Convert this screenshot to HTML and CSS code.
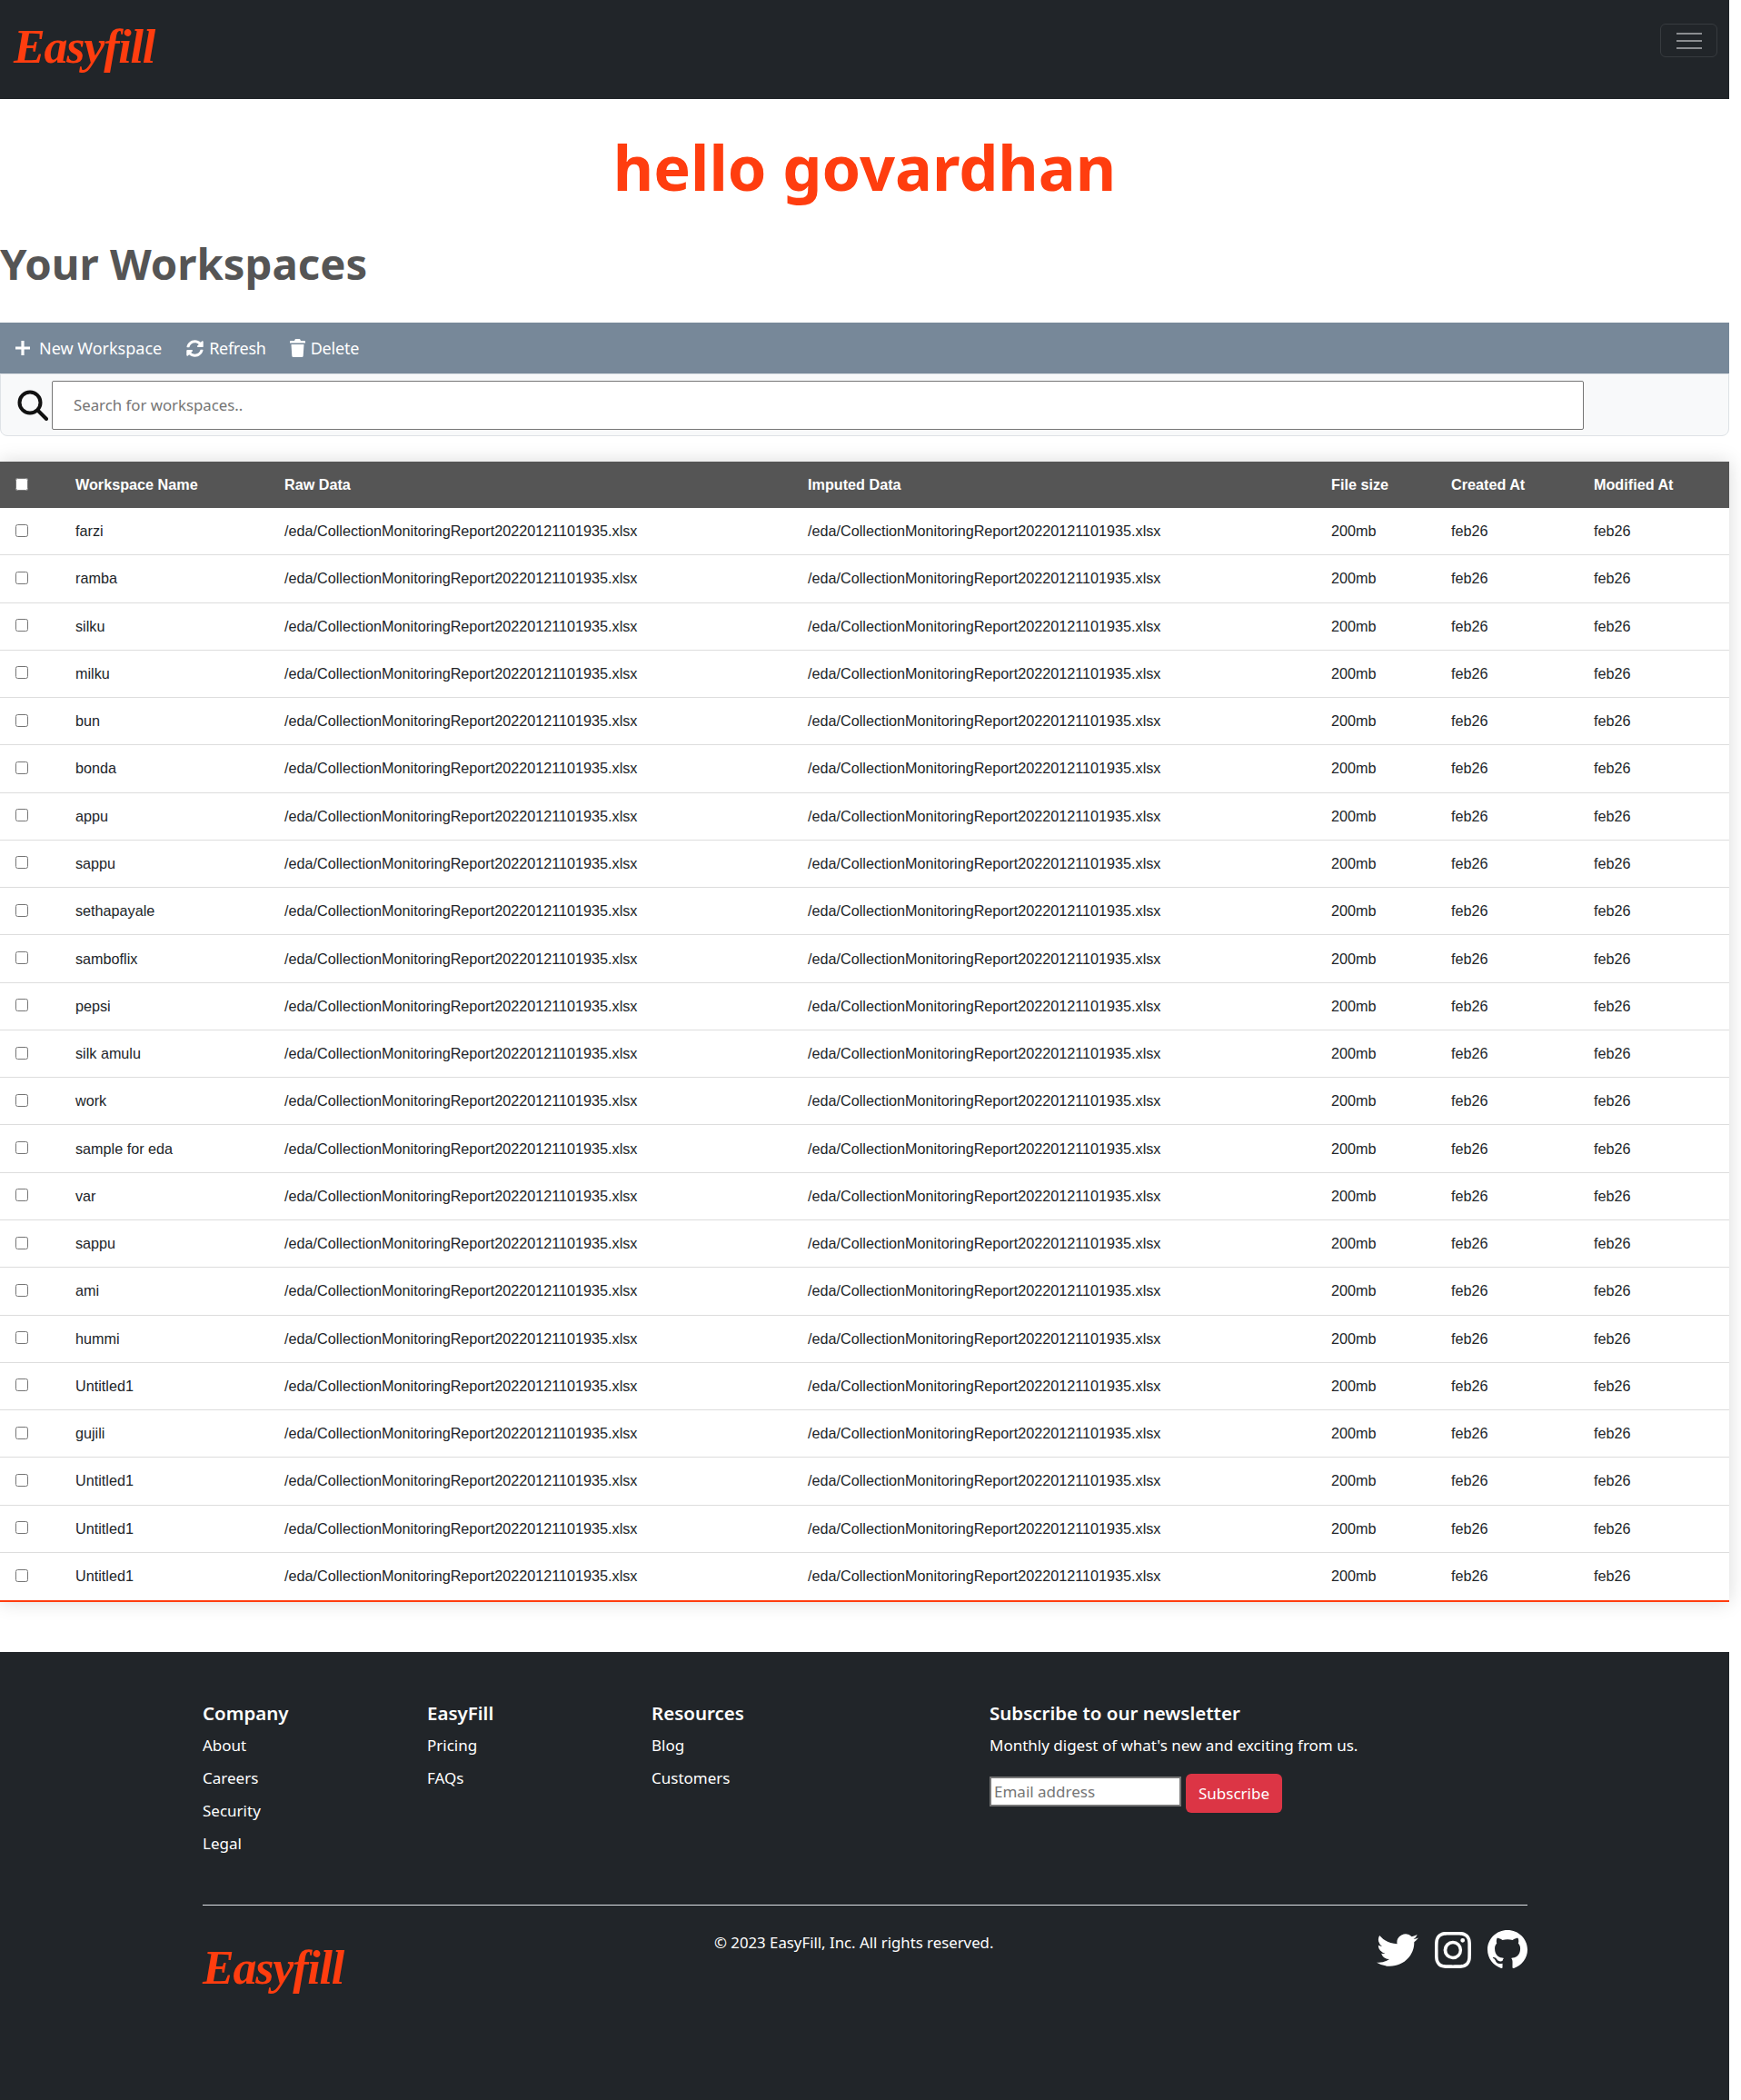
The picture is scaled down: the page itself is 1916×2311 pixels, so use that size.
FILE: index.html
```html
<!DOCTYPE html>
<html lang="en">
<head>
	<meta charset="UTF-8">
	<title>EasyFill Workspaces</title>
	<link rel="stylesheet" href="styles.css">
</head>
<body>
<div class="page">
	<nav class="navbar">
		<a class="brand" href="#">Easyfill</a>
		<button class="toggler" type="button" aria-label="Menu"><span></span><span></span><span></span></button>
	</nav>

	<h1 class="hello">hello govardhan</h1>
	<h2 class="title">Your Workspaces</h2>

	<div class="toolbar">
		<a class="tool tool-new" href="#">
			<svg width="16" height="16" viewBox="0 0 16 16"><path d="M6.400 0h3.200v6.400H16v3.200H9.600V16H6.400V9.600H0V6.400h6.400z" fill="#fff"/></svg>
			New Workspace
		</a>
		<a class="tool tool-refresh" href="#">
			<svg width="19" height="19" viewBox="0 0 512 512"><path fill="#fff" d="M370.72 133.28C339.458 104.008 298.888 87.962 255.848 88c-77.458.068-144.328 53.178-162.791 126.85-1.344 5.363-6.122 9.15-11.651 9.15H24.103c-7.498 0-13.194-6.807-11.807-14.176C33.933 94.924 134.813 8 256 8c66.448 0 126.791 26.136 171.315 68.685L463.03 40.97C478.149 25.851 504 36.559 504 57.941V192c0 13.255-10.745 24-24 24H345.941c-21.382 0-32.09-25.851-16.971-40.971l41.75-41.749zM32 296h134.059c21.382 0 32.09 25.851 16.971 40.971l-41.75 41.75c31.262 29.273 71.835 45.319 114.876 45.28 77.418-.07 144.315-53.144 162.787-126.849 1.344-5.363 6.122-9.15 11.651-9.15h57.304c7.498 0 13.194 6.807 11.807 14.176C478.067 417.076 377.187 504 256 504c-66.448 0-126.791-26.136-171.315-68.685L48.97 471.03C33.851 486.149 8 475.441 8 454.059V320c0-13.255 10.745-24 24-24z"/></svg>
			Refresh
		</a>
		<a class="tool tool-delete" href="#">
			<svg width="17" height="20" viewBox="0 0 17 20"><path fill="#fff" d="M6 0h5l1 2h4a1 1 0 0 1 1 1v1.500H0V3a1 1 0 0 1 1-1h4zM1.500 6h14l-.8 12.500A1.600 1.600 0 0 1 13.100 20H3.900a1.600 1.600 0 0 1-1.600-1.500z"/></svg>
			Delete
		</a>
	</div>

	<div class="searchbar">
		<svg class="search-icon" width="34" height="34" viewBox="0 0 34 34"><circle cx="14" cy="14" r="11.500" fill="none" stroke="#111" stroke-width="4"/><line x1="23" y1="23" x2="32" y2="32" stroke="#111" stroke-width="4" stroke-linecap="round"/></svg>
		<input class="search" type="text" placeholder="Search for workspaces..">
	</div>

	<table class="workspaces">
		<colgroup>
			<col class="c-check"><col class="c-name"><col class="c-raw"><col class="c-imputed"><col class="c-size"><col class="c-created"><col class="c-modified">
		</colgroup>
		<thead>
			<tr><th><input type="checkbox" class="check check-all"></th><th>Workspace Name</th><th>Raw Data</th><th>Imputed Data</th><th>File size</th><th>Created At</th><th>Modified At</th></tr>
		</thead>
		<tbody>
			<tr><td><input type="checkbox" class="check"></td><td>farzi</td><td>/eda/CollectionMonitoringReport20220121101935.xlsx</td><td>/eda/CollectionMonitoringReport20220121101935.xlsx</td><td>200mb</td><td>feb26</td><td>feb26</td></tr>
			<tr><td><input type="checkbox" class="check"></td><td>ramba</td><td>/eda/CollectionMonitoringReport20220121101935.xlsx</td><td>/eda/CollectionMonitoringReport20220121101935.xlsx</td><td>200mb</td><td>feb26</td><td>feb26</td></tr>
			<tr><td><input type="checkbox" class="check"></td><td>silku</td><td>/eda/CollectionMonitoringReport20220121101935.xlsx</td><td>/eda/CollectionMonitoringReport20220121101935.xlsx</td><td>200mb</td><td>feb26</td><td>feb26</td></tr>
			<tr><td><input type="checkbox" class="check"></td><td>milku</td><td>/eda/CollectionMonitoringReport20220121101935.xlsx</td><td>/eda/CollectionMonitoringReport20220121101935.xlsx</td><td>200mb</td><td>feb26</td><td>feb26</td></tr>
			<tr><td><input type="checkbox" class="check"></td><td>bun</td><td>/eda/CollectionMonitoringReport20220121101935.xlsx</td><td>/eda/CollectionMonitoringReport20220121101935.xlsx</td><td>200mb</td><td>feb26</td><td>feb26</td></tr>
			<tr><td><input type="checkbox" class="check"></td><td>bonda</td><td>/eda/CollectionMonitoringReport20220121101935.xlsx</td><td>/eda/CollectionMonitoringReport20220121101935.xlsx</td><td>200mb</td><td>feb26</td><td>feb26</td></tr>
			<tr><td><input type="checkbox" class="check"></td><td>appu</td><td>/eda/CollectionMonitoringReport20220121101935.xlsx</td><td>/eda/CollectionMonitoringReport20220121101935.xlsx</td><td>200mb</td><td>feb26</td><td>feb26</td></tr>
			<tr><td><input type="checkbox" class="check"></td><td>sappu</td><td>/eda/CollectionMonitoringReport20220121101935.xlsx</td><td>/eda/CollectionMonitoringReport20220121101935.xlsx</td><td>200mb</td><td>feb26</td><td>feb26</td></tr>
			<tr><td><input type="checkbox" class="check"></td><td>sethapayale</td><td>/eda/CollectionMonitoringReport20220121101935.xlsx</td><td>/eda/CollectionMonitoringReport20220121101935.xlsx</td><td>200mb</td><td>feb26</td><td>feb26</td></tr>
			<tr><td><input type="checkbox" class="check"></td><td>samboflix</td><td>/eda/CollectionMonitoringReport20220121101935.xlsx</td><td>/eda/CollectionMonitoringReport20220121101935.xlsx</td><td>200mb</td><td>feb26</td><td>feb26</td></tr>
			<tr><td><input type="checkbox" class="check"></td><td>pepsi</td><td>/eda/CollectionMonitoringReport20220121101935.xlsx</td><td>/eda/CollectionMonitoringReport20220121101935.xlsx</td><td>200mb</td><td>feb26</td><td>feb26</td></tr>
			<tr><td><input type="checkbox" class="check"></td><td>silk amulu</td><td>/eda/CollectionMonitoringReport20220121101935.xlsx</td><td>/eda/CollectionMonitoringReport20220121101935.xlsx</td><td>200mb</td><td>feb26</td><td>feb26</td></tr>
			<tr><td><input type="checkbox" class="check"></td><td>work</td><td>/eda/CollectionMonitoringReport20220121101935.xlsx</td><td>/eda/CollectionMonitoringReport20220121101935.xlsx</td><td>200mb</td><td>feb26</td><td>feb26</td></tr>
			<tr><td><input type="checkbox" class="check"></td><td>sample for eda</td><td>/eda/CollectionMonitoringReport20220121101935.xlsx</td><td>/eda/CollectionMonitoringReport20220121101935.xlsx</td><td>200mb</td><td>feb26</td><td>feb26</td></tr>
			<tr><td><input type="checkbox" class="check"></td><td>var</td><td>/eda/CollectionMonitoringReport20220121101935.xlsx</td><td>/eda/CollectionMonitoringReport20220121101935.xlsx</td><td>200mb</td><td>feb26</td><td>feb26</td></tr>
			<tr><td><input type="checkbox" class="check"></td><td>sappu</td><td>/eda/CollectionMonitoringReport20220121101935.xlsx</td><td>/eda/CollectionMonitoringReport20220121101935.xlsx</td><td>200mb</td><td>feb26</td><td>feb26</td></tr>
			<tr><td><input type="checkbox" class="check"></td><td>ami</td><td>/eda/CollectionMonitoringReport20220121101935.xlsx</td><td>/eda/CollectionMonitoringReport20220121101935.xlsx</td><td>200mb</td><td>feb26</td><td>feb26</td></tr>
			<tr><td><input type="checkbox" class="check"></td><td>hummi</td><td>/eda/CollectionMonitoringReport20220121101935.xlsx</td><td>/eda/CollectionMonitoringReport20220121101935.xlsx</td><td>200mb</td><td>feb26</td><td>feb26</td></tr>
			<tr><td><input type="checkbox" class="check"></td><td>Untitled1</td><td>/eda/CollectionMonitoringReport20220121101935.xlsx</td><td>/eda/CollectionMonitoringReport20220121101935.xlsx</td><td>200mb</td><td>feb26</td><td>feb26</td></tr>
			<tr><td><input type="checkbox" class="check"></td><td>gujili</td><td>/eda/CollectionMonitoringReport20220121101935.xlsx</td><td>/eda/CollectionMonitoringReport20220121101935.xlsx</td><td>200mb</td><td>feb26</td><td>feb26</td></tr>
			<tr><td><input type="checkbox" class="check"></td><td>Untitled1</td><td>/eda/CollectionMonitoringReport20220121101935.xlsx</td><td>/eda/CollectionMonitoringReport20220121101935.xlsx</td><td>200mb</td><td>feb26</td><td>feb26</td></tr>
			<tr><td><input type="checkbox" class="check"></td><td>Untitled1</td><td>/eda/CollectionMonitoringReport20220121101935.xlsx</td><td>/eda/CollectionMonitoringReport20220121101935.xlsx</td><td>200mb</td><td>feb26</td><td>feb26</td></tr>
			<tr><td><input type="checkbox" class="check"></td><td>Untitled1</td><td>/eda/CollectionMonitoringReport20220121101935.xlsx</td><td>/eda/CollectionMonitoringReport20220121101935.xlsx</td><td>200mb</td><td>feb26</td><td>feb26</td></tr>
		</tbody>
	</table>

	<footer class="footer">
		<div class="footer-top">
			<div class="f-col">
				<h5>Company</h5>
				<a href="#">About</a>
				<a href="#">Careers</a>
				<a href="#">Security</a>
				<a href="#">Legal</a>
			</div>
			<div class="f-col">
				<h5>EasyFill</h5>
				<a href="#">Pricing</a>
				<a href="#">FAQs</a>
			</div>
			<div class="f-col f-col-wide">
				<h5>Resources</h5>
				<a href="#">Blog</a>
				<a href="#">Customers</a>
			</div>
			<div class="f-news">
				<h5>Subscribe to our newsletter</h5>
				<p>Monthly digest of what's new and exciting from us.</p>
				<form class="news-form">
					<input class="email" type="text" placeholder="Email address">
					<button class="subscribe" type="button">Subscribe</button>
				</form>
			</div>
		</div>
		<div class="footer-bottom">
			<a class="brand brand-foot" href="#">Easyfill</a>
			<p class="copy">© 2023 EasyFill, Inc. All rights reserved.</p>
			<div class="social">
				<svg width="46" height="38" viewBox="0 1.500 16 14" preserveAspectRatio="none"><path fill="#fff" d="M5.026 15c6.038 0 9.341-5.003 9.341-9.334 0-.14 0-.282-.006-.422A6.685 6.685 0 0 0 16 3.542a6.658 6.658 0 0 1-1.889.518 3.301 3.301 0 0 0 1.447-1.817 6.533 6.533 0 0 1-2.087.793A3.286 3.286 0 0 0 7.875 6.030a9.325 9.325 0 0 1-6.767-3.429 3.289 3.289 0 0 0 1.018 4.382A3.323 3.323 0 0 1 .64 6.575v.045a3.288 3.288 0 0 0 2.632 3.218 3.203 3.203 0 0 1-.865.115 3.230 3.230 0 0 1-.614-.057 3.283 3.283 0 0 0 3.067 2.277A6.588 6.588 0 0 1 .78 13.580a6.320 6.320 0 0 1-.78-.045A9.344 9.344 0 0 0 5.026 15z"/></svg>
				<svg width="40" height="40" viewBox="0 0 16 16"><path fill="#fff" d="M8 0C5.829 0 5.556.01 4.703.048 3.850.088 3.269.222 2.760.420a3.917 3.917 0 0 0-1.417.923A3.927 3.927 0 0 0 .42 2.760C.222 3.268.087 3.850.048 4.700.01 5.555 0 5.827 0 8.001c0 2.172.01 2.444.048 3.297.04.852.174 1.433.372 1.942.205.526.478.972.923 1.417.444.445.89.719 1.416.923.51.198 1.090.333 1.942.372C5.555 15.990 5.827 16 8 16s2.444-.01 3.298-.048c.851-.04 1.434-.174 1.943-.372a3.916 3.916 0 0 0 1.416-.923c.445-.445.718-.891.923-1.417.197-.509.332-1.090.372-1.942C15.990 10.445 16 10.173 16 8s-.01-2.445-.048-3.299c-.04-.851-.175-1.433-.372-1.941a3.926 3.926 0 0 0-.923-1.417A3.911 3.911 0 0 0 13.240.42c-.51-.198-1.092-.333-1.943-.372C10.443.01 10.172 0 7.998 0h.003zm-.717 1.442h.718c2.136 0 2.389.007 3.232.046.780.035 1.204.166 1.486.275.373.145.640.319.920.599.280.280.453.546.598.920.11.281.240.705.275 1.485.039.843.047 1.096.047 3.231s-.008 2.389-.047 3.232c-.035.780-.166 1.203-.275 1.485a2.470 2.470 0 0 1-.599.919c-.28.28-.546.453-.92.598-.28.11-.704.24-1.485.276-.843.038-1.096.047-3.232.047s-2.390-.009-3.233-.047c-.78-.036-1.203-.166-1.485-.276a2.478 2.478 0 0 1-.92-.598 2.480 2.480 0 0 1-.6-.92c-.109-.281-.24-.705-.275-1.485-.038-.843-.046-1.096-.046-3.233 0-2.136.008-2.388.046-3.231.036-.78.166-1.204.276-1.486.145-.373.319-.64.599-.92.28-.28.546-.453.92-.598.282-.11.705-.24 1.485-.276.738-.034 1.024-.044 2.515-.045v.002zm4.988 1.328a.96.96 0 1 0 0 1.920.96.96 0 0 0 0-1.920zm-4.270 1.122a4.109 4.109 0 1 0 0 8.217 4.109 4.109 0 0 0 0-8.217zm0 1.441a2.667 2.667 0 1 1 0 5.334 2.667 2.667 0 0 1 0-5.334z"/></svg>
				<svg width="44" height="43" viewBox="0 0 16 16" preserveAspectRatio="none"><path fill="#fff" d="M8 0C3.580 0 0 3.580 0 8c0 3.540 2.290 6.530 5.470 7.590.4.070.55-.17.55-.38 0-.19-.01-.82-.01-1.490-2.010.37-2.530-.49-2.690-.94-.09-.23-.48-.94-.82-1.130-.28-.15-.68-.52-.01-.53.63-.01 1.080.58 1.230.82.72 1.210 1.870.87 2.330.66.07-.52.28-.87.51-1.070-1.780-.2-3.640-.89-3.640-3.950 0-.87.31-1.590.82-2.150-.08-.2-.36-1.020.08-2.120 0 0 .67-.21 2.200.82.64-.18 1.320-.27 2-.27.68 0 1.360.09 2 .27 1.530-1.040 2.200-.82 2.200-.82.44 1.100.16 1.920.08 2.120.51.56.82 1.270.82 2.150 0 3.070-1.870 3.750-3.650 3.950.29.25.54.73.54 1.480 0 1.070-.01 1.930-.01 2.200 0 .21.15.46.55.38A8.012 8.012 0 0 0 16 8c0-4.420-3.580-8-8-8z"/></svg>
			</div>
		</div>
	</footer>
</div>
</body>
</html>
```

FILE: styles.css
```css
* {
	box-sizing: border-box;
}

body {
	margin: 0;
	font-family: "Noto Sans", "Open Sans", sans-serif;
	color: #212529;
	background: #fff;
}

a {
	color: inherit;
	text-decoration: none;
}

.page {
	width: 1903px;
	min-height: 2311px;
	display: flex;
	flex-direction: column;
}

/* top bar */
.navbar {
	height: 109px;
	background: #212529;
	display: flex;
	align-items: flex-start;
	justify-content: space-between;
	padding: 0 13px 0 15px;
}

.brand {
	font-family: "Liberation Serif", serif;
	font-style: italic;
	font-weight: bold;
	font-size: 52px;
	line-height: 104px;
	color: #ff3d0f;
	letter-spacing: -1.2px;
}

.toggler {
	width: 63px;
	height: 37px;
	margin-top: 26px;
	padding: 0;
	background: transparent;
	border: 1px solid #373b3f;
	border-radius: 6px;
	display: flex;
	flex-direction: column;
	align-items: center;
	justify-content: center;
	gap: 6px;
}

.toggler span {
	display: block;
	width: 28px;
	height: 2px;
	background: #8b8d90;
}

/* headings */
.hello {
	margin: 33px 0 0;
	text-align: center;
	font-size: 68.4px;
	line-height: 84px;
	font-weight: 700;
	color: #ff3d0f;
}

.title {
	margin: 35px 0 0;
	font-size: 47.3px;
	line-height: 58px;
	font-weight: 700;
	color: #555;
}

/* toolbar */
.toolbar {
	height: 56px;
	margin-top: 36px;
	background: #778899;
	display: flex;
	align-items: center;
	color: #fff;
	font-size: 18px;
}

.tool {
	display: flex;
	align-items: center;
}

.tool-new {
	margin-left: 17px;
	gap: 10px;
}

.tool-refresh {
	margin-left: 27px;
	gap: 6px;
	letter-spacing: -.3px;
}

.tool-delete {
	margin-left: 26px;
	gap: 6px;
	letter-spacing: -.2px;
}

.searchbar {
	height: 69px;
	background: #f8f9fa;
	border: 1px solid #dee2e6;
	border-radius: 0 0 8px 8px;
	display: flex;
	align-items: center;
	padding-left: 18px;
	gap: 4px;
}

.search {
	width: 1686px;
	height: 54px;
	padding: 0 23px;
	border: 1px solid #767676;
	border-radius: 2px;
	background: #fff;
	font-family: inherit;
	font-size: 16.8px;
}

.search::placeholder,
.email::placeholder {
	color: #757575;
}

/* table */
.workspaces {
	width: 1903px;
	margin-top: 28px;
	table-layout: fixed;
	border-collapse: separate;
	border-spacing: 0;
	font-family: "Liberation Sans", Arial, sans-serif;
	font-size: 16.2px;
	box-shadow: 0 0 20px rgba(0, 0, 0, .15);
	border-bottom: 2px solid #ff3d0f;
}

.c-check { width: 67px; }
.c-name { width: 230px; }
.c-raw { width: 576px; }
.c-imputed { width: 576px; }
.c-size { width: 132px; }
.c-created { width: 157px; }
.c-modified { width: 165px; }

.workspaces th {
	height: 51px;
	padding: 0 0 0 16px;
	background: #555;
	color: #fff;
	font-weight: bold;
	text-align: left;
}

.workspaces td {
	height: 52.27px;
	padding: 0 0 0 16px;
	border-bottom: 1px solid #dddddd;
	color: #212529;
}

.workspaces tbody tr:last-child td {
	border-bottom: 0;
}

.check {
	display: block;
	width: 14px;
	height: 14px;
	margin: -2px 0 0 1px;
}

/* footer */
.footer {
	flex: 1;
	margin-top: 55px;
	background: #212529;
	color: #fff;
	padding: 51px 222px 0 223px;
}

.footer-top {
	display: flex;
	height: 228px;
	border-bottom: 1px solid #dee2e6;
}

.footer h5 {
	margin: 0 0 2px;
	font-size: 20.5px;
	line-height: 32px;
	font-weight: 600;
}

.f-col {
	width: 247px;
	display: flex;
	flex-direction: column;
}

.f-col-wide {
	width: 372px;
}

.f-col a {
	font-size: 17px;
	line-height: 36px;
}

.f-news p {
	margin: 0;
	font-size: 17px;
	line-height: 36px;
}

.news-form {
	display: flex;
	align-items: flex-start;
	gap: 5px;
	margin-top: 13px;
}

.email {
	width: 211px;
	height: 33px;
	margin-top: 3px;
	padding: 0 3px;
	border: 2px solid #767676;
	border-radius: 0;
	background: #fff;
	font-family: inherit;
	font-size: 17px;
}

.subscribe {
	width: 106px;
	height: 43px;
	padding: 0;
	border: 0;
	border-radius: 6px;
	background: #dc3545;
	color: #fff;
	font-family: inherit;
	font-size: 17px;
}

.footer-bottom {
	display: grid;
	grid-template-columns: 563px 1fr auto;
	align-items: start;
	padding-top: 27px;
}

.brand-foot {
	display: block;
	line-height: 84px;
}

.copy {
	margin: 0;
	font-size: 16.8px;
	line-height: 28px;
}

.social {
	display: flex;
	align-items: center;
	gap: 18px;
}
```
